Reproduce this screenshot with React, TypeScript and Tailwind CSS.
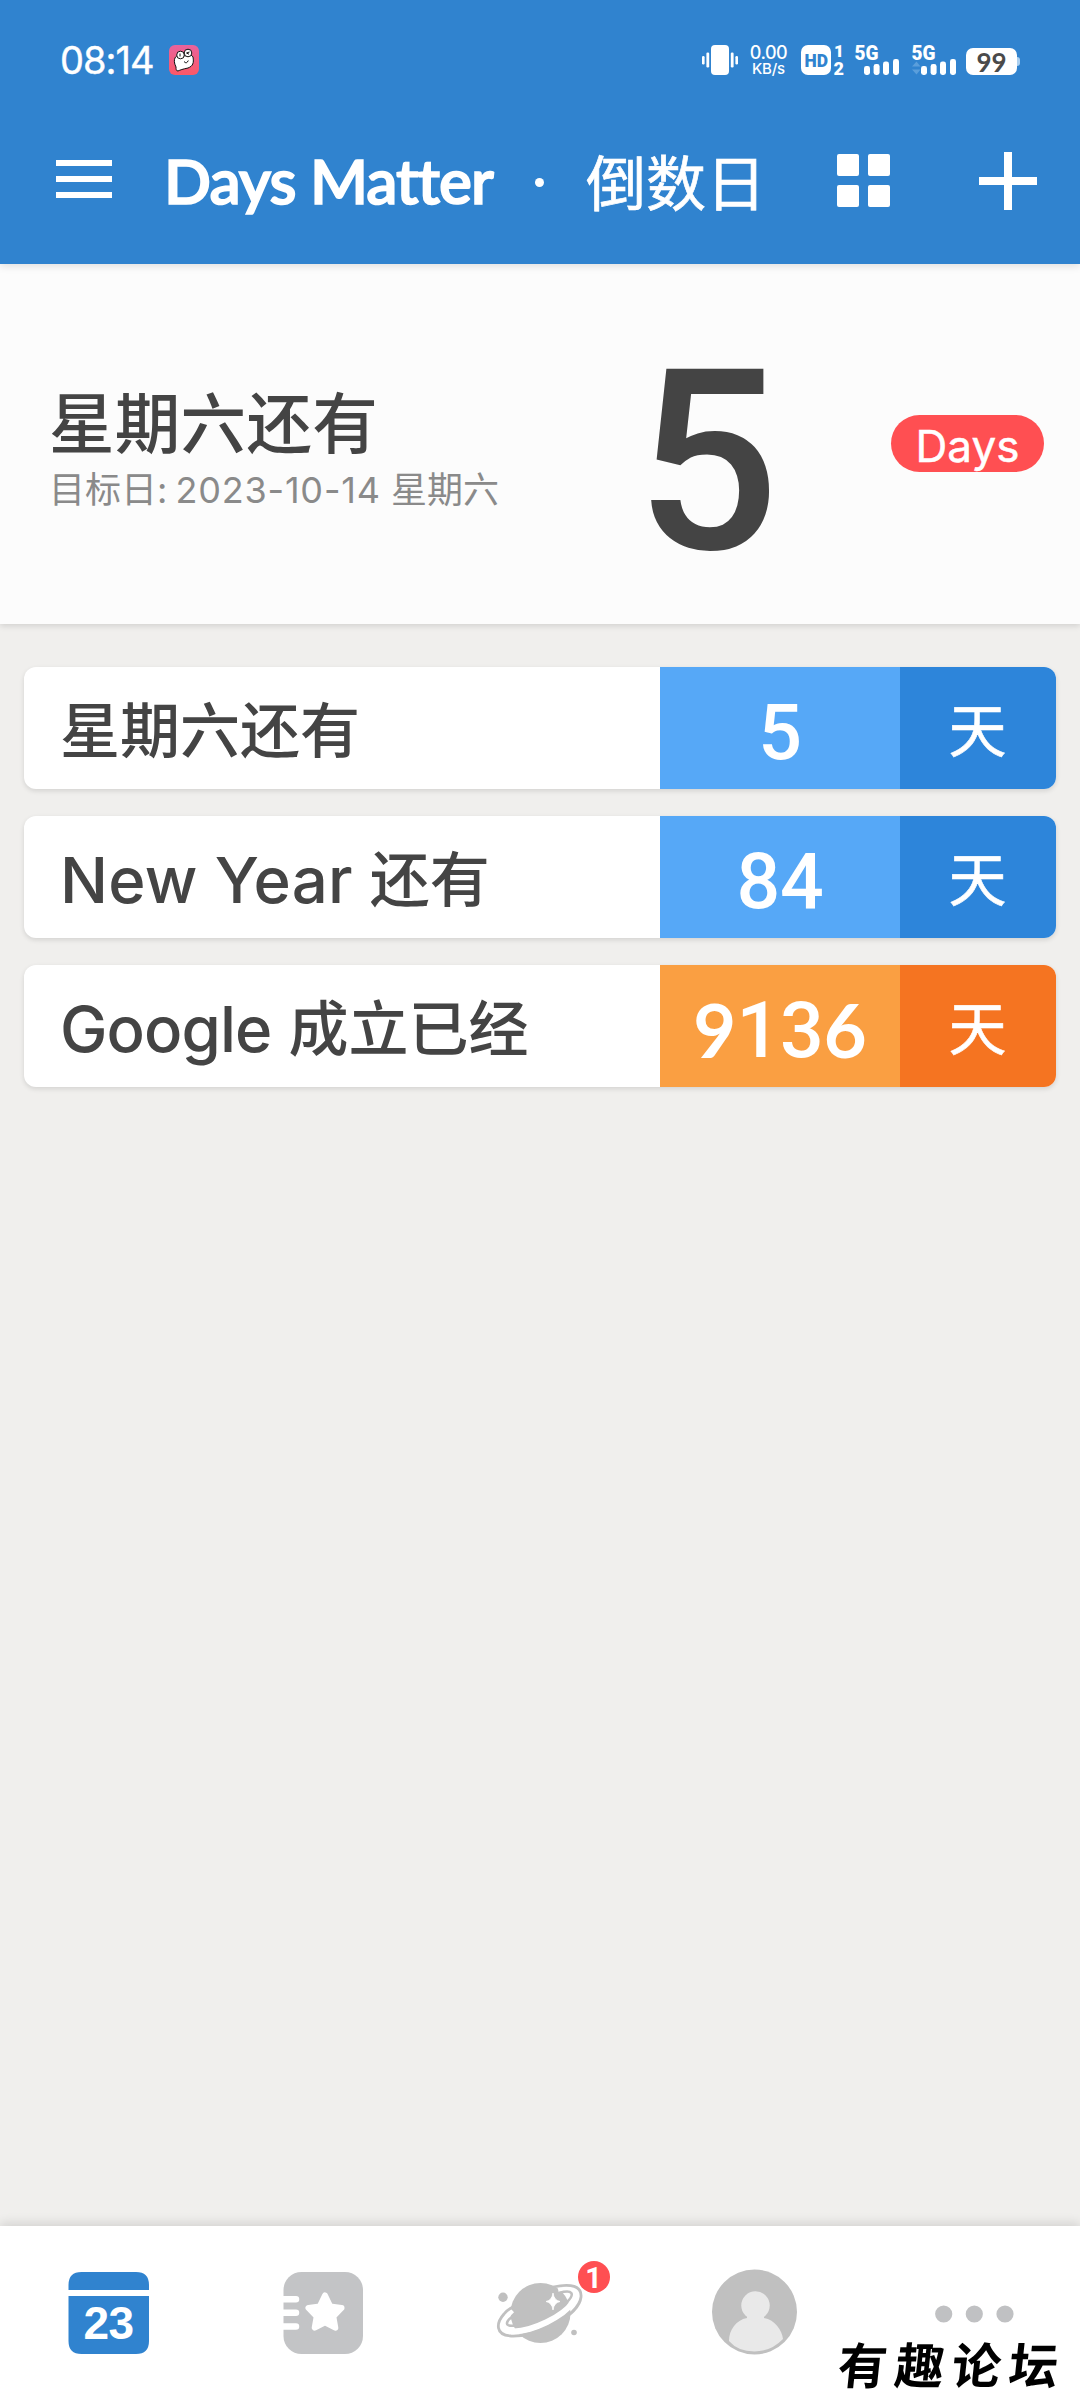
import React from "react";

const CJK = "font-[Inter,'Noto_Sans_CJK_SC',sans-serif]";

function SignalIcon({ arrows = false }: { arrows?: boolean }) {
  return (
    <svg className="overflow-visible" width="45" height="30" viewBox="0 0 45 30" fill="white">
      <text x="-0.5" y="14.6" fontFamily="Roboto, sans-serif" fontWeight="900" fontSize="20" textLength="24" lengthAdjust="spacingAndGlyphs">5G</text>
      <rect x="9" y="21" width="6" height="9" rx="2.4" />
      <rect x="18.6" y="19" width="6" height="11" rx="2.4" />
      <rect x="28" y="16.5" width="6" height="13.5" rx="2.4" />
      <rect x="38" y="14" width="6" height="16" rx="2.4" />
      {arrows && <path d="M0 21.5 4.5 16.5 8.5 21.5ZM0 24.5H8.5L4.5 29.5Z" fill="#5a9edb" />}
    </svg>
  );
}

function StatusBar() {
  return (
    <div className="flex h-[120px] items-center pl-[60px] pr-[60px] text-white">
      <span className="w-[94px] whitespace-nowrap text-[38px] leading-none tracking-[-1px] [-webkit-text-stroke:0.4px_white]">08:14</span>
      <svg className="ml-[15px]" width="30" height="30" viewBox="0 0 30 30">
        <defs>
          <linearGradient id="app" x1="0" y1="0" x2="0" y2="1">
            <stop offset="0" stopColor="#e8639c" />
            <stop offset="1" stopColor="#fb5868" />
          </linearGradient>
        </defs>
        <rect width="30" height="30" rx="6" fill="url(#app)" />
        <path d="M6 13C7 10 11 11 14 11S22 8 24 12C25 18 24 21 19 23 14 24 11 25 9 26 7 26 7 24 7 22 5 18 5 15 6 13Z" fill="white" stroke="#111" />
        <circle cx="11.5" cy="10" r="3.8" fill="white" stroke="#111" />
        <circle cx="19" cy="8" r="3.8" fill="white" stroke="#111" />
        <path d="M11 8.5V11.5M20.5 7 17.5 8 20 9.2M15 16.5Q17.5 19.5 19.3 15.5" fill="none" stroke="#111" />
      </svg>
      <div className="ml-auto flex items-center">
        <svg width="36" height="30" viewBox="0 0 36 30" fill="white">
          <rect x="9" width="18" height="30" rx="4" />
          <rect x="4.4" y="7.5" width="2.8" height="15" rx="1.2" />
          <rect x="28.8" y="7.5" width="2.8" height="15" rx="1.2" />
          <rect y="11" width="2.6" height="8.5" rx="1.2" />
          <rect x="33.4" y="11" width="2.6" height="8.5" rx="1.2" />
        </svg>
        <div className="ml-[11px] mt-px flex w-[39px] flex-col items-center whitespace-nowrap font-medium leading-[16px]">
          <span className="text-[18px] tracking-[-0.5px]">0.00</span>
          <span className="text-[15px] tracking-[-0.2px]">KB/s</span>
        </div>
        <svg className="ml-[13px] overflow-visible" width="43" height="30" viewBox="0 0 43 30" fill="white" fontFamily="Roboto, sans-serif" fontWeight="900">
          <rect width="30" height="30" rx="7" />
          <text x="3.5" y="21.5" fontSize="19" fill="#3083cf" textLength="23.5" lengthAdjust="spacingAndGlyphs">HD</text>
          <text x="33" y="12.3" fontSize="17">1</text>
          <text x="32.5" y="29.5" fontSize="18">2</text>
        </svg>
        <div className="ml-[11px]"><SignalIcon /></div>
        <div className="ml-3"><SignalIcon arrows /></div>
        <div className="ml-[9px] mt-[3px] flex items-center">
          <div className="flex h-[27px] w-[51px] items-center justify-center rounded-[7px] bg-white font-['Lato',sans-serif] text-[26px] font-bold leading-none text-[#4a4a4a]">99</div>
          <div className="h-[9px] w-[3px] rounded-r-[3px] bg-[#acd0f0]" />
        </div>
      </div>
    </div>
  );
}

function TitleBar() {
  return (
    <div className="flex h-[144px] items-start pl-[56px] pr-[43px] pt-[32px] text-white">
      <div className="mt-2 flex w-[56px] flex-col gap-[10px]">
        <div className="h-[6px] bg-white" />
        <div className="h-[6px] bg-white" />
        <div className="h-[6px] bg-white" />
      </div>
      <h1 className="ml-[52px] mt-[-2px] w-[333px] whitespace-nowrap font-['Lato',sans-serif] text-[62px] font-semibold leading-[60px] tracking-[-1px] [-webkit-text-stroke:1.6px_white]">Days Matter</h1>
      <div className="ml-[38px] mt-[26px] size-[9px] rounded-full bg-white" />
      <span className="ml-[42px] mt-[2px] w-[180px] whitespace-nowrap text-[60px] leading-[60px] [-webkit-text-stroke:0.7px_white]">倒数日</span>
      <div className="ml-[71px] mt-[2px] grid grid-cols-2 gap-[9px]">
        <div className="size-[22px] rounded-[2px] bg-white" />
        <div className="size-[22px] rounded-[2px] bg-white" />
        <div className="size-[22px] rounded-[2px] bg-white" />
        <div className="size-[22px] rounded-[2px] bg-white" />
      </div>
      <svg className="ml-auto" width="58" height="58" viewBox="0 0 58 58" stroke="white" strokeWidth="8">
        <path d="M0 29H58M29 0V58" />
      </svg>
    </div>
  );
}

function Hero() {
  return (
    <section className="flex h-[360px] bg-[#fcfcfc] shadow-[0_2px_6px_rgba(0,0,0,0.13)]">
      <div className="h-full w-[600px] pl-[49px] pt-[123px]">
        <div className="whitespace-nowrap text-[65.5px] font-medium leading-[76px] tracking-[0.3px] text-[#444]">星期六还有</div>
        <div className="mt-[3px] whitespace-nowrap text-[36px] leading-[48px] text-[#8a8a8a]">
          目标日<span className="mr-[-2px]">: </span><span className="tracking-[0.8px]">2023-10-14</span> 星期六
        </div>
      </div>
      <div className="w-[215px] pt-[74px] text-center font-['Roboto',sans-serif] text-[253px] font-medium leading-[250px] text-[#444]">5</div>
      <div className="ml-[76px] mt-[151px] flex h-[57px] w-[153px] items-center justify-center rounded-full bg-[#ff4f52] pt-[4px] text-[44px] leading-none text-white [-webkit-text-stroke:0.5px_white]">Days</div>
    </section>
  );
}

type Item = { title: string; latin?: string; tracking?: string; days: string; main: string; side: string };

const items: Item[] = [
  { title: "星期六还有", days: "5", main: "bg-[#56a8f7]", side: "bg-[#2d85da]" },
  { latin: "New Year", tracking: "tracking-[0.2px]", title: "还有", days: "84", main: "bg-[#56a8f7]", side: "bg-[#2d85da]" },
  { latin: "Google", tracking: "tracking-[-0.9px]", title: "成立已经", days: "9136", main: "bg-[#fa9f42]", side: "bg-[#f57421]" },
];

function Row({ item }: { item: Item }) {
  return (
    <li className="flex h-[122px] rounded-xl bg-white shadow-[0_2px_5px_rgba(0,0,0,0.12)]">
      <div className="flex w-[636px] items-center gap-[17px] whitespace-nowrap pl-[36px] pt-[5px] text-[60px] font-medium text-[#444]">
        {item.latin && <span className={`text-[63.5px] ${item.tracking}`}>{item.latin}</span>}
        <span>{item.title}</span>
      </div>
      <div className={`flex w-[240px] items-center justify-center pt-[11px] leading-none text-white ${item.main}`}>
        {item.days.split("").map((d, i) =>
          "69".includes(d) ? (
            <span key={i} className="mt-[-4px] flex w-[43.5px] justify-center font-['Lato',sans-serif] text-[74px] font-bold">{d}</span>
          ) : (
            <span key={i} className="flex w-[43.5px] justify-center font-['Roboto',sans-serif] text-[77px] font-medium">{d}</span>
          )
        )}
      </div>
      <div className={`flex w-[156px] items-center justify-center rounded-r-xl pr-[1px] pt-[6px] text-[58px] text-white [-webkit-text-stroke:0.6px_white] ${item.side}`}>天</div>
    </li>
  );
}

function TabBar() {
  return (
    <nav className="grid h-[174px] grid-cols-5 bg-white shadow-[0_-3px_10px_rgba(0,0,0,0.12)]">
      <svg width="216" height="174" viewBox="0 2226 216 174">
        <path d="M68.5 2290V2285Q68.5 2272 81.5 2272H136Q149 2272 149 2285V2290ZM68.5 2296H149V2341Q149 2354 136 2354H81.5Q68.5 2354 68.5 2341Z" fill="#3083cf" />
        <text x="108.5" y="2338.5" textAnchor="middle" fontFamily="Liberation Sans, sans-serif" fontWeight="700" fontSize="46" fill="white" letterSpacing="-0.5">23</text>
      </svg>
      <svg width="216" height="174" viewBox="216 2226 216 174">
        <rect x="283.5" y="2272" width="79.5" height="82" rx="18" fill="#c3c4c6" />
        <path d="M283 2299.3H296M283 2312.8H296M283 2326.6H296" stroke="white" strokeWidth="6.5" strokeLinecap="round" />
        <path d="M325 2295.5 330.3 2306.5 341.5 2308 333.3 2316.4 335.3 2327.7 325 2322.3 314.7 2327.7 316.7 2316.4 308.5 2308 319.7 2306.5Z" fill="white" stroke="white" strokeWidth="6" strokeLinejoin="round" />
      </svg>
      <svg width="216" height="174" viewBox="432 2226 216 174">
        <circle cx="540.5" cy="2313" r="30" fill="#c0c0c0" />
        <path d="M558 2289C576 2285 580 2291 573 2302 563 2317 532 2331 514 2331.5 499 2332 501 2320 512 2310" fill="none" stroke="white" strokeWidth="6" />
        <path d="M553 2287C571 2283 582 2286 581 2297 579 2316 536 2337 511 2336 495 2335 496 2323 504 2314Q507 2310 513 2307" fill="none" stroke="#c0c0c0" strokeWidth="2.8" />
        <path d="M559 2293C573 2289 575 2294 567 2302M513 2316C505 2322 504 2327 516 2325.5" fill="none" stroke="#c0c0c0" strokeWidth="2.6" />
        <path d="M553 2293Q554 2300.5 560 2301.5 554 2302.5 553 2310 552 2302.5 546 2301.5 552 2300.5 553 2293Z" fill="white" stroke="white" strokeWidth="0.8" />
        <circle cx="503" cy="2297.3" r="4.7" fill="#c0c0c0" />
        <circle cx="574" cy="2332.5" r="2.8" fill="#c0c0c0" />
        <circle cx="594" cy="2277" r="16" fill="#ff4f52" />
        <text x="593.5" y="2287.5" textAnchor="middle" fontFamily="Roboto, sans-serif" fontWeight="700" fontSize="29" fill="white">1</text>
      </svg>
      <svg width="216" height="174" viewBox="648 2226 216 174">
        <circle cx="754.5" cy="2312" r="42.5" fill="#c0c0c0" />
        <circle cx="755.5" cy="2305.5" r="14.2" fill="#e9e9e9" />
        <path d="M747 2313H764V2318C775 2320 782 2330 783 2339Q771 2351.5 754.5 2351.5T729 2341C729 2330 736 2320 747 2318Z" fill="#e9e9e9" />
      </svg>
      <svg width="216" height="174" viewBox="864 2226 216 174" fill="#c0c1c3">
        <circle cx="943.7" cy="2314" r="8.6" />
        <circle cx="974.3" cy="2314" r="8.6" />
        <circle cx="1005" cy="2314" r="8.6" />
      </svg>
    </nav>
  );
}

export default function App() {
  return (
    <div className={`relative flex h-[2400px] w-[1080px] flex-col overflow-hidden bg-[#f0efed] ${CJK}`}>
      <header className="relative z-10 h-[264px] bg-[#3083cf] shadow-[0_2px_8px_rgba(0,0,0,0.12)]">
        <StatusBar />
        <TitleBar />
      </header>
      <Hero />
      <ul className="mt-[43px] flex flex-1 flex-col gap-[27px] px-6">
        {items.map((item) => (
          <Row key={item.days} item={item} />
        ))}
      </ul>
      <TabBar />
      <div className="absolute bottom-[5px] right-[14px] -skew-x-6 whitespace-nowrap text-[49px] font-bold leading-[56px] tracking-[8px] text-black">有趣论坛</div>
    </div>
  );
}
